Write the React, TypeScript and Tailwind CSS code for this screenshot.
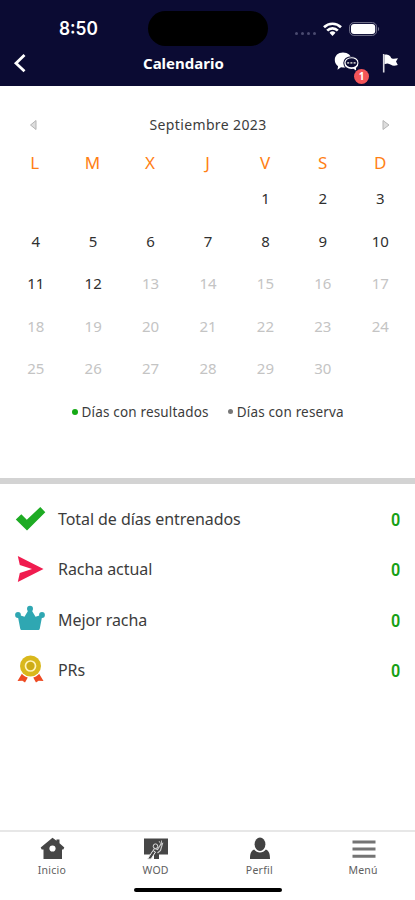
import { ReactNode } from "react";

const WEEKDAYS = ["L", "M", "X", "J", "V", "S", "D"];
const OFFSET = 4;
const TODAY = 12;
const DAYS_IN_MONTH = 30;

export default function App() {
  return (
    <div className="flex h-[900px] w-[415px] flex-col overflow-hidden bg-white font-['Noto_Sans',sans-serif] text-[#3c3c3c]">
      <Header />
      <Calendar />
      <div className="h-[6px] shrink-0 bg-[#d3d3d3]" />
      <Stats />
      <TabBar />
    </div>
  );
}

const Header = () => {
  return (
    <header className="h-[86px] shrink-0 bg-[#0b0b33] text-white">
      <div className="flex h-[46px] items-start pt-[11px]">
        <div className="w-[148px] pl-[59px] pt-[6px] font-['Inter',sans-serif] text-[18px] font-semibold leading-[24px]">
          <span className="inline-block origin-left scale-x-[0.96]">8:50</span>
        </div>
        <div className="h-[35px] w-[120px] rounded-full bg-black" />
        <div className="flex h-[35px] items-center pl-[27px]">
          <div className="flex gap-[3px] pt-[9px]">
            {[0, 1, 2, 3].map((i) => (
              <span key={i} className="size-[3px] rounded-full bg-[#4a4a70]" />
            ))}
          </div>
          <svg className="ml-[7px] h-[14px] w-[19px]" viewBox="0 0 19 14">
            <g fill="none" stroke="#fff" strokeWidth="2.7">
              <path d="M1 5.2a12.2 12.2 0 0 1 17 0" />
              <path d="M4.2 8.6a7.6 7.6 0 0 1 10.6 0" />
            </g>
            <path d="M9.5 14l-3-3.2a4.3 4.3 0 0 1 6 0z" fill="#fff" />
          </svg>
          <svg className="ml-[7px] h-[14px] w-[31px]" viewBox="0 0 31 14">
            <rect x=".6" y=".6" width="27" height="12.8" rx="4.2" fill="none" stroke="#77778f" />
            <rect x="2" y="2" width="24.2" height="10" rx="3" fill="#fff" />
            <path d="M29 5v4c1.500-.5 1.500-3.500 0-4z" fill="#77778f" />
          </svg>
        </div>
      </div>
      <div className="flex h-[34px] items-center">
        <div className="w-[143px] pl-[13px]">
          <svg className="h-[20px] w-[14px]" viewBox="0 0 14 20">
            <path d="M11.500 2L3 10.200l8.500 8" fill="none" stroke="#fff" strokeWidth="2.800" />
          </svg>
        </div>
        <h1 className="w-[191px] text-[15px] font-bold leading-[34px]">Calendario</h1>
        <div className="relative h-[34px] w-[46px]">
          <ChatIcon />
          <span className="absolute left-[20px] top-[23px] flex size-[15px] items-center justify-center rounded-full bg-[#f45559] text-[10px] font-bold">1</span>
        </div>
        <svg className="ml-[2px] h-[22px] w-[17px]" viewBox="0 0 17 22">
          <path d="M1.700 2v18.500" stroke="#d8d8df" strokeWidth="1.600" />
          <path d="M2.500 3c2.500-1 4 .1 5.500 1.100 1 .8.500 2 2 2.500 1.700.4 4 .1 6-.3l-2 3.200 1.800 3.500c-3 1-5.200 1-6.800-.2-2-1.500-4-2-6.500-.5z" fill="#fff" />
        </svg>
      </div>
    </header>
  );
};

const Calendar = () => {
  const days = Array.from({ length: DAYS_IN_MONTH }, (_, i) => i + 1);
  return (
    <section className="h-[392px] shrink-0 px-[6px] pt-[25px]">
      <div className="flex h-[26px] items-center justify-between pl-[22px] pr-[18px]">
        <svg className="size-[11px]" viewBox="0 0 11 11">
          <path d="M8 1.500v9L2.500 6z" fill="#ddd" stroke="#b5b5b5" />
        </svg>
        <span className="mr-[3px] text-[14px] tracking-[0.380px]">Septiembre 2023</span>
        <svg className="size-[11px]" viewBox="0 0 11 11">
          <path d="M3 1.500v9L9 6z" fill="#ddd" stroke="#b5b5b5" />
        </svg>
      </div>
      <div className="grid grid-cols-7 pt-[13px] text-center text-[17px] leading-[26px] text-[#ff8014]">
        {WEEKDAYS.map((d) => (
          <span key={d}>{d}</span>
        ))}
      </div>
      <div className="grid auto-rows-[42.400px] grid-cols-7 pl-px pt-[1.400px] text-center text-[15px] leading-[42px]">
        {Array.from({ length: OFFSET }, (_, i) => (
          <span key={`e${i}`} />
        ))}
        {days.map((day) => (
          <span key={day} className={day <= TODAY ? "text-[#303030]" : "text-[#c4c4c4]"}>
            {day}
          </span>
        ))}
      </div>
      <div className="flex items-center pl-[66px] pt-[11.600px] text-[13.500px] leading-[22px] tracking-[0.170px]">
        <span className="mr-[4px] size-[5.500px] rounded-full bg-[#14a914]" />
        <span>Días con resultados</span>
        <span className="ml-[19px] mr-[4px] size-[5px] rounded-full bg-[#777]" />
        <span>Días con reserva</span>
      </div>
    </section>
  );
};

const Stats = () => {
  return (
    <section className="flex-1 pt-[10px]">
      <Stat label="Total de días entrenados" icon={<CheckIcon />} />
      <Stat label="Racha actual" icon={<ArrowIcon />} />
      <Stat label="Mejor racha" icon={<CrownIcon />} />
      <Stat label="PRs" icon={<MedalIcon />} />
    </section>
  );
};

const Stat = ({ label, icon }: { label: string; icon: ReactNode }) => {
  return (
    <div className="flex h-[50.300px] items-center pl-[15px] pr-[14.500px]">
      <div className="w-[43px]">{icon}</div>
      <span className="flex-1 text-[16px] tracking-[-0.070px]">{label}</span>
      <span className="origin-right scale-x-90 pt-px font-['Roboto',sans-serif] text-[18px] font-semibold text-[#16a016]">0</span>
    </div>
  );
};

const TabBar = () => {
  return (
    <nav className="h-[70px] shrink-0 border-t-2 border-[#e7e7e7]">
      <div className="grid h-[56px] grid-cols-4">
        <Tab label="Inicio" icon={<HomeIcon />} />
        <Tab label="WOD" icon={<BoardIcon />} />
        <Tab label="Perfil" icon={<ProfileIcon />} />
        <Tab label="Menú" icon={<MenuIcon />} />
      </div>
      <div className="mx-auto h-[4px] w-[148px] rounded-full bg-black" />
    </nav>
  );
};

const Tab = ({ label, icon }: { label: string; icon: ReactNode }) => {
  return (
    <div className="flex flex-col items-center pt-[5px] text-[10.500px] leading-[16px] tracking-[0.250px] text-[#606060]">
      {icon}
      <span>{label}</span>
    </div>
  );
};

const ChatIcon = () => (
  <svg className="mt-[6px] h-[21px] w-[26px]" viewBox="0 0 26 20" preserveAspectRatio="none">
    <path d="M9 .5c5 0 8.500 3 8.500 7s-3.500 7.200-8.500 7.200l-2-.1L3.500 17l.6-3.500C2 12.200.8 10 .8 7.500.8 3.500 4 .5 9 .5z" fill="#fff" />
    <path d="M17.500 4.500c4.500 0 7.500 2.500 7.500 6 0 2.200-1 3.700-2.500 4.800l.3 3.400-3.500-2.200c-5.800.8-9.500-2.200-9.500-6 0-3.500 3.200-6 7.700-6z" fill="#fff" stroke="#0b0b33" />
    <ellipse cx="17.500" cy="10.300" rx="5.900" ry="4.300" fill="#0b0b33" />
    <path d="M13.200 10.300h8.600" stroke="#bbb" strokeWidth="1.700" strokeDasharray="2 1.200" />
  </svg>
);

const CheckIcon = () => (
  <svg className="h-[26px] w-[31px]" viewBox="0 0 31 26">
    <path d="M.8 13.500l5.500-5.200 5.500 5.500L25.300 1l5 5.200L12 24.500z" fill="#1eab24" />
  </svg>
);

const ArrowIcon = () => (
  <svg className="ml-[2px] h-[28px] w-[27px]" viewBox="0 0 27 28">
    <path d="M.8 1L26.500 14 .8 27l2-9L15 14 2.800 10z" fill="#f01c4f" />
  </svg>
);

const CrownIcon = () => (
  <svg className="mb-[3px] h-[26px] w-[30px]" viewBox="0 0 30 26">
    <g fill="#2fa7b2">
      <circle cx="3" cy="10" r="2.900" />
      <circle cx="15" cy="3.800" r="3" />
      <circle cx="27" cy="10" r="2.900" />
      <path d="M2.500 9.500l7 2.300L13.500 5h3l4 6.800 7-2.300-2.700 14c-.2 1-.8 1.500-1.800 1.500H7c-1 0-1.600-.5-1.800-1.500z" />
    </g>
  </svg>
);

const MedalIcon = () => (
  <svg className="mb-px ml-[2px] h-[29px] w-[28px]" viewBox="0 0 28 29">
    <path d="M5 18.500l5.800 4L8 27.500l-2.600-1.700L.5 26z" fill="#ee4b23" />
    <path d="M22 18.500l-5.800 4L19 27.500l2.600-1.700 4.900.2z" fill="#ee4b23" />
    <circle cx="13.500" cy="11.500" r="11.200" fill="#fff" />
    <circle cx="13.500" cy="11" r="10.500" fill="#d9b81c" />
    <circle cx="13.500" cy="11" r="5" fill="#cdac16" stroke="#fff4bd" strokeWidth="1.700" />
  </svg>
);

const HomeIcon = () => (
  <svg className="mb-[2px] ml-px h-[23px] w-[25px]" viewBox="0 0 25 23">
    <path d="M12.500 .8l4 3V2.500h3v3.700l4.800 4.300-1 2H22V22H3.500v-9.500H1.700l-1-2z" fill="#464646" />
    <circle cx="12.500" cy="11.500" r="3.100" fill="#fff" />
  </svg>
);

const BoardIcon = () => (
  <svg className="mb-[2px] h-[23px] w-[26px]" viewBox="0 0 26 23">
    <path d="M1 1.500h24V17.500h-9V22h-5v-4.500H1z" fill="#464646" />
    <path d="M4.500 22l5.500-8.500 2.500 1.500-4.500 7z" fill="#464646" stroke="#eee" />
    <path d="M10 13.500l1.500-2 3 1 3.500-5.500 1.500-.5-2 7-3 2.500" fill="none" stroke="#ccc" strokeWidth="1.200" />
    <circle cx="12.500" cy="9.200" r="2.300" fill="#464646" stroke="#ddd" />
    <path d="M16 4l1.500 2.500M18.500 3.500v4.500" stroke="#bbb" />
  </svg>
);

const ProfileIcon = () => (
  <svg className="mb-[2px] ml-px h-[23px] w-[22px]" viewBox="0 0 22 23">
    <ellipse cx="11" cy="7.300" rx="5.400" ry="6.700" fill="#424242" />
    <path d="M5.200 12.500c2.700 4 8.900 4 11.600 0 3.200 1.200 4.200 4.500 4.200 9.500H1c0-5 1-8.300 4.200-9.500z" fill="#424242" />
  </svg>
);

const MenuIcon = () => (
  <svg className="mb-[2px] ml-px h-[23px] w-[24px]" viewBox="0 0 24 23">
    <path d="M.5 5h23M.5 12h23M.5 19.200h23" stroke="#747474" strokeWidth="3" />
  </svg>
);
